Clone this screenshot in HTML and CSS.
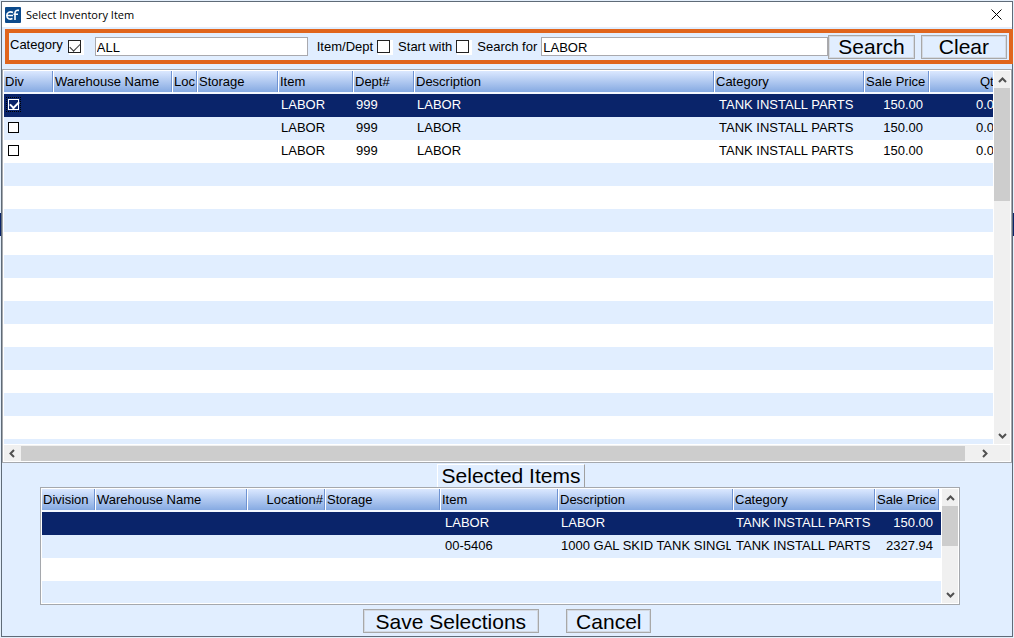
FILE: index.html
```html
<!DOCTYPE html>
<html lang="en">
<head>
    <meta charset="UTF-8">
    <meta name="viewport" content="width=device-width, initial-scale=1">
    <title>Select Inventory Item</title>
    <link rel="stylesheet" href="styles.css">
</head>
<body>

<div class="window">
    <header class="title-bar">
        <svg class="app-icon" viewBox="0 0 16 16" aria-hidden="true">
            <rect width="16" height="16" rx="1" fill="#0b4a8c"/>
            <path d="M8 5.4C4.500 4 1.800 5.800 1.800 8.600c0 3 2.900 4.200 5.700 3M2 8.500h6" fill="none" stroke="#fff" stroke-width="1.6"/>
            <path d="M10 13V6c0-2 1.200-3 4-2.600M8.500 7.200h4.500" fill="none" stroke="#fff" stroke-width="1.6"/>
        </svg>
        <h1>Select Inventory Item</h1>
        <button class="close-btn" type="button" aria-label="Close">
            <svg viewBox="0 0 11 11"><path d="M.5.5l10 10M10.500.5l-10 10" stroke="#000" fill="none"/></svg>
        </button>
    </header>

    <form class="search-bar">
        <label class="label-category" for="useCategory">Category</label>
        <input class="box-check" type="checkbox" id="useCategory" checked>
        <input class="text-box category-box" type="text" value="ALL" aria-label="Category value">
        <label for="itemDept">Item/Dept</label>
        <input class="box-check" type="checkbox" id="itemDept">
        <label for="startWith">Start with</label>
        <input class="box-check" type="checkbox" id="startWith">
        <label for="searchFor">Search for</label>
        <input class="text-box search-box" type="text" id="searchFor" value="LABOR">
        <button class="btn" type="button">Search</button>
        <button class="btn btn-clear" type="button">Clear</button>
    </form>

    <section class="grid inventory">
        <div class="grid-view">
            <table>
                <colgroup>
                    <col class="w-div"><col class="w-warehouse"><col class="w-loc"><col class="w-storage"><col class="w-item">
                    <col class="w-dept"><col><col class="w-category"><col class="w-price"><col class="w-qty">
                </colgroup>
                <thead>
                    <tr>
                        <th>Div</th><th>Warehouse Name</th><th>Loc</th><th>Storage</th><th>Item</th>
                        <th>Dept#</th><th>Description</th><th>Category</th><th>Sale Price</th><th class="qty">Qty</th>
                    </tr>
                </thead>
                <tbody>
                    <tr class="selected">
                        <td><input class="row-check" type="checkbox" aria-label="Select row 1" checked></td><td></td><td></td><td></td><td>LABOR</td>
                        <td>999</td><td>LABOR</td><td class="indent">TANK INSTALL PARTS</td><td class="price">150.00</td><td class="qty">0.00</td>
                    </tr>
                    <tr>
                        <td><input class="row-check" type="checkbox" aria-label="Select row 2"></td><td></td><td></td><td></td><td>LABOR</td>
                        <td>999</td><td>LABOR</td><td class="indent">TANK INSTALL PARTS</td><td class="price">150.00</td><td class="qty">0.00</td>
                    </tr>
                    <tr>
                        <td><input class="row-check" type="checkbox" aria-label="Select row 3"></td><td></td><td></td><td></td><td>LABOR</td>
                        <td>999</td><td>LABOR</td><td class="indent">TANK INSTALL PARTS</td><td class="price">150.00</td><td class="qty">0.00</td>
                    </tr>
                </tbody>
            </table>
        </div>
        <div class="scroll scroll-y">
            <svg class="arrow" viewBox="0 0 9 6"><path d="M1 5l3.500-3.500L8 5"/></svg>
            <div class="thumb"></div>
            <svg class="arrow arrow-end" viewBox="0 0 9 6"><path d="M1 1l3.500 3.500L8 1"/></svg>
        </div>
        <div class="scroll scroll-x">
            <svg class="arrow" viewBox="0 0 6 9"><path d="M5 1L1.500 4.500 5 8"/></svg>
            <div class="thumb"></div>
            <svg class="arrow" viewBox="0 0 6 9"><path d="M1 1l3.500 3.500L1 8"/></svg>
        </div>
    </section>

    <h2 class="tab-title">Selected Items</h2>

    <section class="grid chosen">
        <div class="grid-view">
            <table>
                <colgroup>
                    <col class="w-division"><col class="w-name"><col class="w-location"><col class="w-shelf"><col class="w-sku">
                    <col><col class="w-group"><col class="w-cost"><col class="w-rest">
                </colgroup>
                <thead>
                    <tr>
                        <th>Division</th><th>Warehouse Name</th><th class="right">Location#</th><th>Storage</th><th>Item</th>
                        <th>Description</th><th>Category</th><th>Sale Price</th><th></th>
                    </tr>
                </thead>
                <tbody>
                    <tr class="selected">
                        <td></td><td></td><td></td><td></td><td class="indent">LABOR</td>
                        <td>LABOR</td><td>TANK INSTALL PARTS</td><td class="price">150.00</td><td></td>
                    </tr>
                    <tr>
                        <td></td><td></td><td></td><td></td><td class="indent">00-5406</td>
                        <td><span class="clip">1000 GAL SKID TANK SINGLE</span></td><td>TANK INSTALL PARTS</td><td class="price">2327.94</td><td></td>
                    </tr>
                </tbody>
            </table>
        </div>
        <div class="scroll scroll-y">
            <svg class="arrow" viewBox="0 0 9 6"><path d="M1 5l3.500-3.500L8 5"/></svg>
            <div class="thumb"></div>
            <svg class="arrow arrow-end" viewBox="0 0 9 6"><path d="M1 1l3.500 3.500L8 1"/></svg>
        </div>
    </section>

    <footer class="actions">
        <button class="btn btn-save" type="button">Save Selections</button>
        <button class="btn" type="button">Cancel</button>
    </footer>
</div>

</body>
</html>
```

FILE: styles.css
```css
* {
    box-sizing: border-box;
}

body {
    margin: 0;
    padding: 1px;
    min-height: 100vh;
    display: flex;
    font-family: "Liberation Sans", Arial, sans-serif;
    font-size: 13px;
    color: #000;
    background: linear-gradient(#e4effb 213px, #0a246a 213px, #0a246a 236px, #e4effb 236px);
}

.window {
    flex: 1;
    min-width: 0;
    display: flex;
    flex-direction: column;
    border: 1px solid #5f6b78;
    background: #e1eeff;
}

/* title bar */
.title-bar {
    display: flex;
    align-items: center;
    height: 25px;
    padding: 0 10px 0 3px;
    background: #fff;
}

.app-icon {
    width: 16px;
    height: 16px;
}

.title-bar h1 {
    flex: 1;
    margin: 0 0 0 5px;
    font: 11px "Open Sans", sans-serif;
}

.close-btn {
    display: flex;
    padding: 0;
    border: 0;
    background: none;
}

.close-btn svg {
    width: 11px;
    height: 11px;
}

/* search bar */
.search-bar {
    display: flex;
    align-items: center;
    height: 35px;
    margin: 2px -1px 5px 3px;
    padding: 0 2px 0 1px;
    border: 4px solid #e0651d;
}

.search-bar label {
    white-space: nowrap;
    margin-right: 4px;
}

.search-bar .label-category {
    margin-right: 5px;
    padding-bottom: 4px;
}

.box-check {
    appearance: none;
    flex: none;
    width: 13px;
    height: 13px;
    margin: 0 8px 0 0;
    border: 1px solid #222;
    background: #fff;
    box-shadow: 2px 1px 0 1px #fff;
}

.box-check:checked {
    margin-right: 14px;
}

.box-check:checked::after {
    content: "";
    display: block;
    width: 9px;
    height: 5px;
    margin: 2px 1px;
    border: solid #333;
    border-width: 0 0 1px 1px;
    transform: rotate(-45deg);
}

.text-box {
    height: 19px;
    min-width: 0;
    padding: 2px 1px 0;
    border: 1px solid #a9a9ae;
    background: #fff;
    font: inherit;
    color: inherit;
}

.category-box {
    width: 213px;
    margin-right: 9px;
}

.search-box {
    flex: 1;
}

.btn {
    height: 24px;
    padding: 0 9px;
    border: 1px solid #a8a8a8;
    box-shadow: inset 0 0 0 1px #d3d9e2;
    background: #e1eeff;
    font: 21px/21px "Liberation Sans", Arial, sans-serif;
    color: #000;
}

.btn-clear {
    margin-left: 6px;
    padding: 0 17px;
}

/* grids */
.grid {
    display: grid;
    grid-template-columns: 1fr 17px;
    border: 1px solid #a5a8ad;
    padding: 1px;
    background: #fff;
}

.grid-view {
    overflow: hidden;
    /* empty rows keep the stripes going below the data */
    background: repeating-linear-gradient(#fff 0 23px, #e1eeff 23px 46px) 0 23px;
}

.grid table {
    width: 100%;
    table-layout: fixed;
    border-collapse: separate;
    border-spacing: 0;
}

.grid th,
.grid td {
    overflow: hidden;
    height: 23px;
    padding: 0 1px;
    line-height: 21px;
    white-space: nowrap;
    vertical-align: top;
    text-align: left;
    font-weight: normal;
}

.grid td {
    padding-left: 2px;
}

.grid th {
    border-right: 1px solid #fff;
    border-bottom: 2px solid #f4f8ff;
    background: linear-gradient(to left, #6f93d2 1px, transparent 1px), linear-gradient(#dbe8ff, #86aae2);
}

.grid .selected {
    background: #0a246a;
    color: #fff;
}

.grid .indent {
    padding-left: 4px;
}

.grid .price {
    padding-right: 7px;
    text-align: right;
}

.grid th.right {
    text-align: right;
    padding-right: 2px;
}

.grid .qty {
    padding-left: 46px;
}

.grid th.qty {
    padding-left: 50px;
}

.clip {
    display: block;
    overflow: hidden;
    margin-right: 2px;
}

.row-check {
    appearance: none;
    display: block;
    width: 11px;
    height: 11px;
    margin: 5px 0 0 2px;
    border: 1px solid #000;
    background: #fff;
}

.row-check:checked {
    border-color: #fff;
    background: #0a246a;
    outline: 1px dotted #000;
    outline-offset: 1px;
}

.row-check:checked::after {
    content: "";
    display: block;
    width: 7px;
    height: 4px;
    margin: 1px;
    border: solid #fff;
    border-width: 0 0 2px 2px;
    transform: rotate(-45deg);
}

/* scroll bars */
.scroll {
    display: flex;
    align-items: center;
    background: #f0f0f0;
}

.scroll .thumb {
    background: #cdcdcd;
}

.arrow {
    flex: none;
    fill: none;
    stroke: #505050;
    stroke-width: 2;
}

.scroll-y {
    flex-direction: column;
    margin-left: 1px;
}

.scroll-y .arrow {
    width: 9px;
    height: 6px;
    margin: 6px 0 5px;
}

.scroll-y .arrow-end {
    margin-top: auto;
}

.scroll-y .thumb {
    width: 100%;
}

.scroll-x {
    grid-column: 1 / 3;
    height: 17px;
    border-top: 1px solid #fff;
}

.scroll-x .arrow {
    width: 6px;
    height: 9px;
    margin: 0 6px 0 5px;
}

/* inventory list */
.inventory {
    flex: 1;
    grid-template-rows: 1fr auto;
    min-height: 200px;
}

.inventory table {
    width: calc(100% + 17px);
}

.inventory .thumb {
    height: 113px;
}

.inventory .scroll-x {
    padding-right: 16px;
}

.inventory .scroll-x .thumb {
    flex: 1;
    height: 15px;
    margin-right: 12px;
}

.w-div { width: 50px; }
.w-warehouse { width: 119px; }
.w-loc { width: 25px; }
.w-storage { width: 81px; }
.w-item { width: 75px; }
.w-dept { width: 61px; }
.w-category { width: 150px; }
.w-price { width: 65px; }
.w-qty { width: 80px; }

/* selected items */
.tab-title {
    align-self: center;
    height: 23px;
    margin: 1px 0 0 8px;
    padding: 0 4px;
    border: solid #fff;
    border-width: 1px 1px 0;
    border-right-color: #a0a0a0;
    font-size: 21px;
    font-weight: normal;
    line-height: 22px;
}

.chosen {
    height: 118px;
    margin: 0 52px 0 38px;
}

.chosen .thumb {
    height: 40px;
}

.w-division { width: 54px; }
.w-name { width: 152px; }
.w-location { width: 78px; }
.w-shelf { width: 115px; }
.w-sku { width: 118px; }
.w-group { width: 142px; }
.w-cost { width: 64px; }
.w-rest { width: 1px; }

.actions {
    display: flex;
    justify-content: center;
    gap: 27px;
    padding: 4px 0 3px;
}

.btn-save {
    padding: 0 12px;
}
```
